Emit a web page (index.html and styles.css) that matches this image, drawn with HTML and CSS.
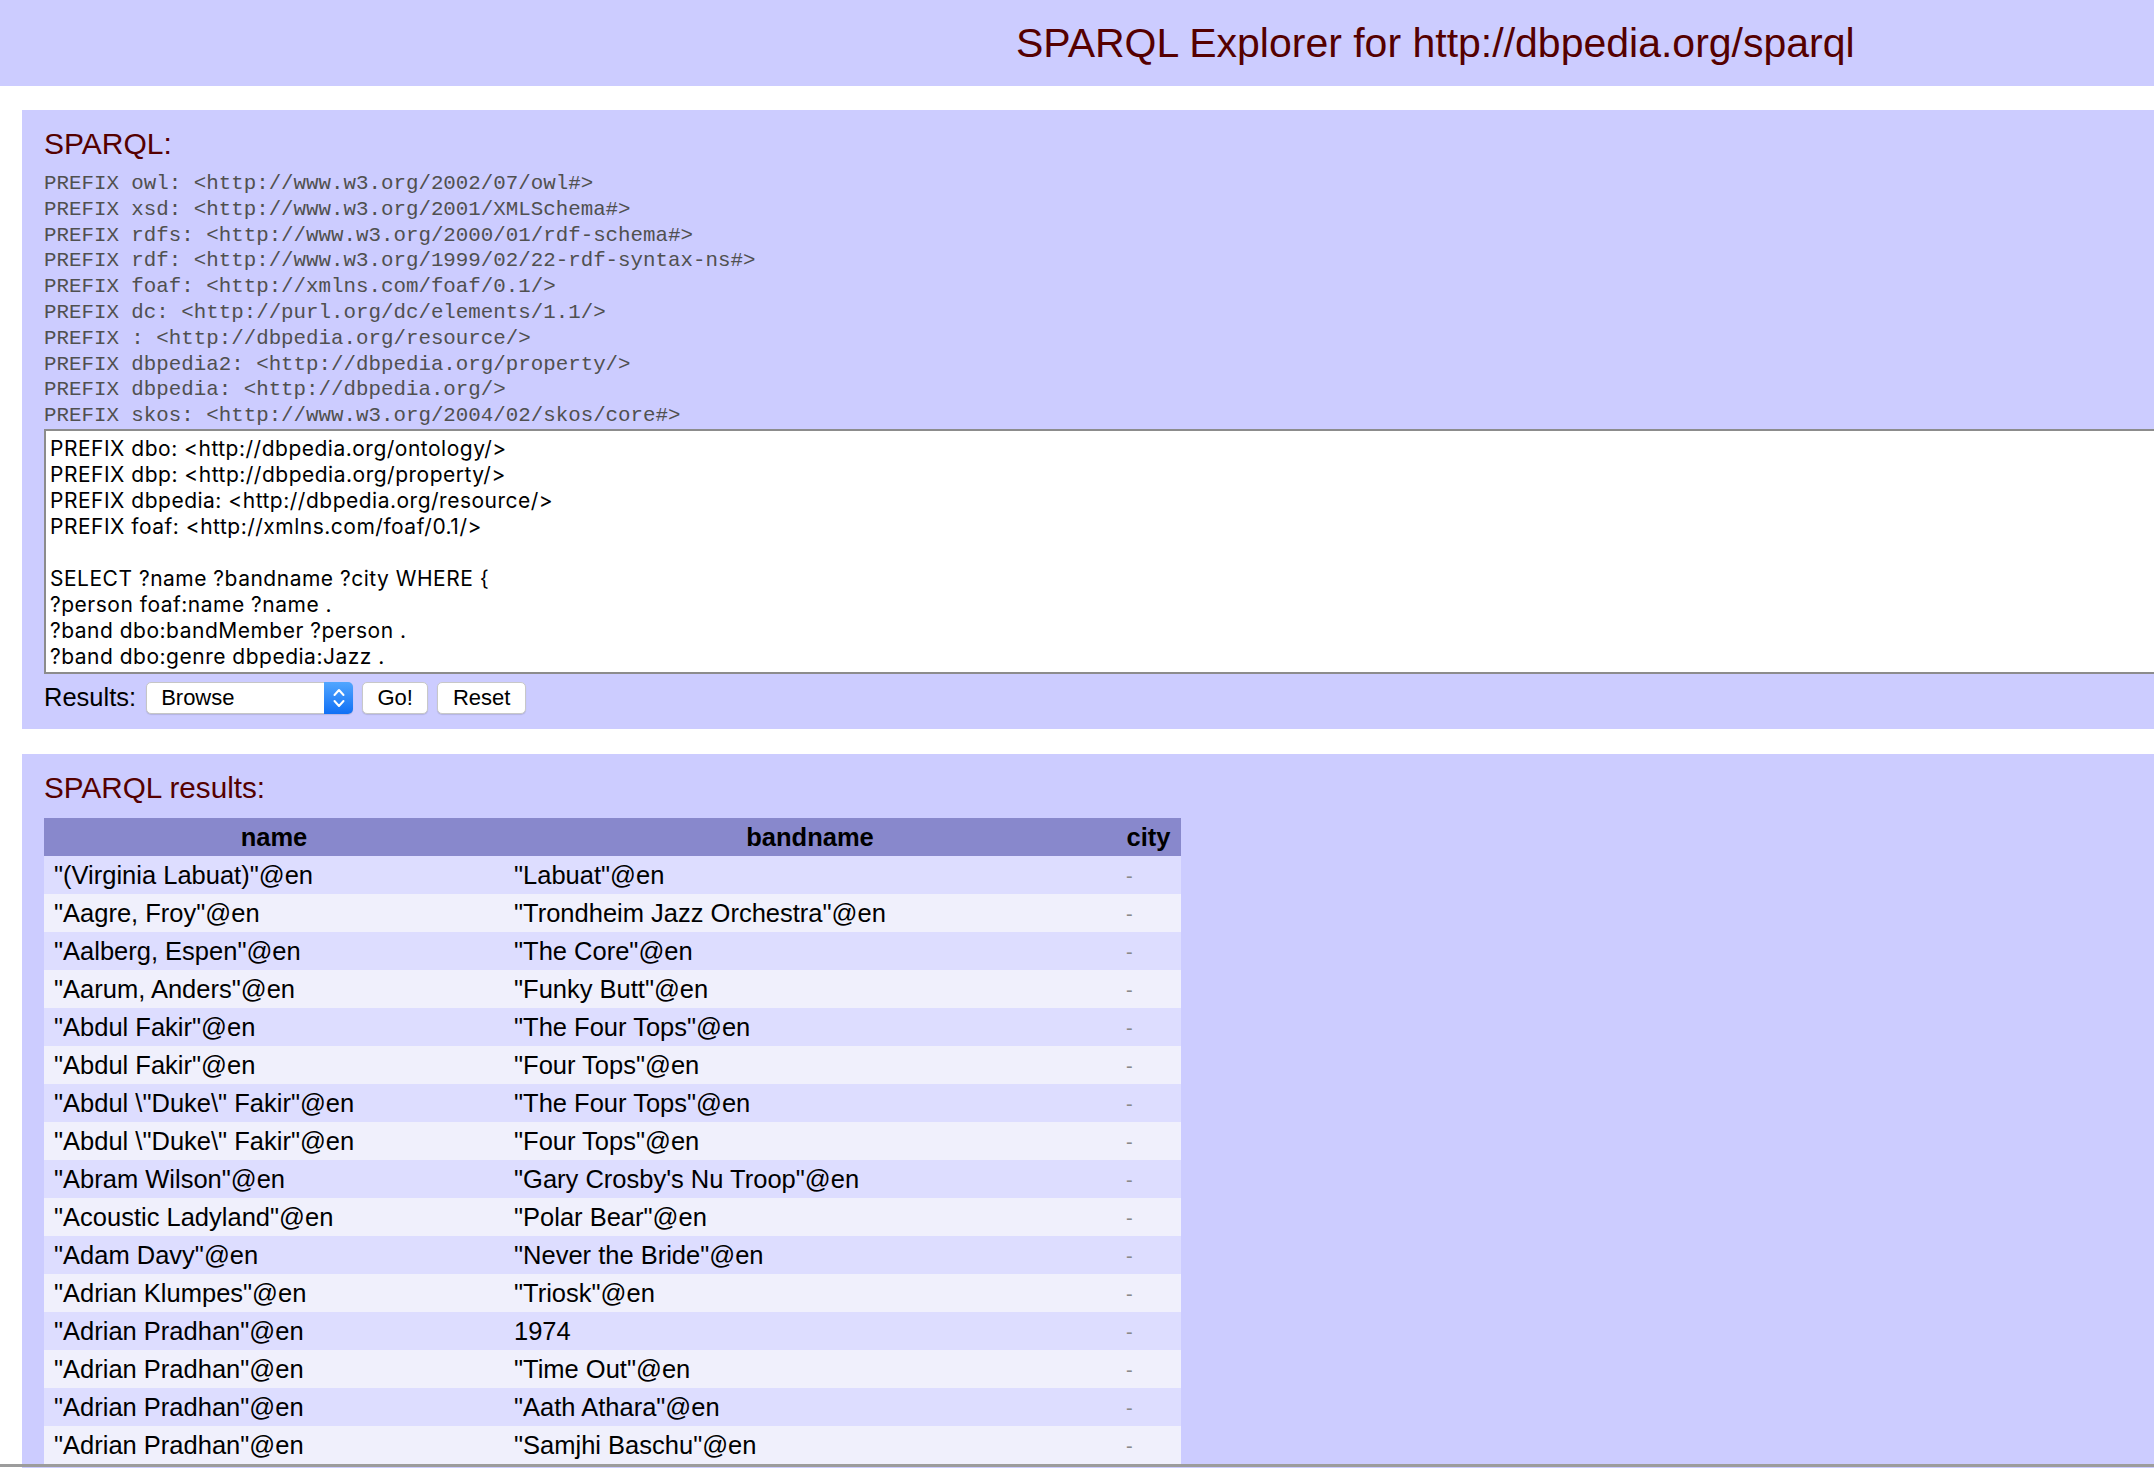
FILE: index.html
```html
<!DOCTYPE html>
<html lang="en">
<head>
<meta charset="utf-8">
<title>SPARQL Explorer for http://dbpedia.org/sparql</title>
<link rel="stylesheet" href="styles.css">
</head>
<body>
<div class="banner">
  <h1>SPARQL Explorer for http://dbpedia.org/sparql</h1>
</div>

<div class="panel">
  <h2>SPARQL:</h2>
  <pre class="prefixes">PREFIX owl: &lt;http://www.w3.org/2002/07/owl#&gt;
PREFIX xsd: &lt;http://www.w3.org/2001/XMLSchema#&gt;
PREFIX rdfs: &lt;http://www.w3.org/2000/01/rdf-schema#&gt;
PREFIX rdf: &lt;http://www.w3.org/1999/02/22-rdf-syntax-ns#&gt;
PREFIX foaf: &lt;http://xmlns.com/foaf/0.1/&gt;
PREFIX dc: &lt;http://purl.org/dc/elements/1.1/&gt;
PREFIX : &lt;http://dbpedia.org/resource/&gt;
PREFIX dbpedia2: &lt;http://dbpedia.org/property/&gt;
PREFIX dbpedia: &lt;http://dbpedia.org/&gt;
PREFIX skos: &lt;http://www.w3.org/2004/02/skos/core#&gt;</pre>
  <textarea class="query" spellcheck="false">PREFIX dbo: &lt;http://dbpedia.org/ontology/&gt;
PREFIX dbp: &lt;http://dbpedia.org/property/&gt;
PREFIX dbpedia: &lt;http://dbpedia.org/resource/&gt;
PREFIX foaf: &lt;http://xmlns.com/foaf/0.1/&gt;

SELECT ?name ?bandname ?city WHERE {
?person foaf:name ?name .
?band dbo:bandMember ?person .
?band dbo:genre dbpedia:Jazz .</textarea>
  <div class="controls">
    <span class="label">Results:</span>
    <div class="picker">
      <select class="picker-select">
        <option>Browse</option>
        <option>as JSON</option>
        <option>as XML</option>
      </select>
      <span class="picker-arrow">
        <svg width="12" height="24" viewBox="0 0 12 24" aria-hidden="true">
          <polyline points="1.5,9 6,4 10.5,9" fill="none" stroke="#fff" stroke-width="2" stroke-linecap="round" stroke-linejoin="round"/>
          <polyline points="1.5,15 6,20 10.5,15" fill="none" stroke="#fff" stroke-width="2" stroke-linecap="round" stroke-linejoin="round"/>
        </svg>
      </span>
    </div>
    <button class="btn btn-go">Go!</button>
    <button class="btn btn-reset">Reset</button>
  </div>
</div>

<div class="panel panel-results">
  <h2>SPARQL results:</h2>
  <table class="results">
    <thead>
      <tr><th class="col-name">name</th><th class="col-band">bandname</th><th class="col-city">city</th></tr>
    </thead>
    <tbody>
      <tr><td>"(Virginia Labuat)"@en</td><td>"Labuat"@en</td><td><span class="unbound">-</span></td></tr>
      <tr><td>"Aagre, Froy"@en</td><td>"Trondheim Jazz Orchestra"@en</td><td><span class="unbound">-</span></td></tr>
      <tr><td>"Aalberg, Espen"@en</td><td>"The Core"@en</td><td><span class="unbound">-</span></td></tr>
      <tr><td>"Aarum, Anders"@en</td><td>"Funky Butt"@en</td><td><span class="unbound">-</span></td></tr>
      <tr><td>"Abdul Fakir"@en</td><td>"The Four Tops"@en</td><td><span class="unbound">-</span></td></tr>
      <tr><td>"Abdul Fakir"@en</td><td>"Four Tops"@en</td><td><span class="unbound">-</span></td></tr>
      <tr><td>"Abdul \"Duke\" Fakir"@en</td><td>"The Four Tops"@en</td><td><span class="unbound">-</span></td></tr>
      <tr><td>"Abdul \"Duke\" Fakir"@en</td><td>"Four Tops"@en</td><td><span class="unbound">-</span></td></tr>
      <tr><td>"Abram Wilson"@en</td><td>"Gary Crosby's Nu Troop"@en</td><td><span class="unbound">-</span></td></tr>
      <tr><td>"Acoustic Ladyland"@en</td><td>"Polar Bear"@en</td><td><span class="unbound">-</span></td></tr>
      <tr><td>"Adam Davy"@en</td><td>"Never the Bride"@en</td><td><span class="unbound">-</span></td></tr>
      <tr><td>"Adrian Klumpes"@en</td><td>"Triosk"@en</td><td><span class="unbound">-</span></td></tr>
      <tr><td>"Adrian Pradhan"@en</td><td>1974</td><td><span class="unbound">-</span></td></tr>
      <tr><td>"Adrian Pradhan"@en</td><td>"Time Out"@en</td><td><span class="unbound">-</span></td></tr>
      <tr><td>"Adrian Pradhan"@en</td><td>"Aath Athara"@en</td><td><span class="unbound">-</span></td></tr>
      <tr><td>"Adrian Pradhan"@en</td><td>"Samjhi Baschu"@en</td><td><span class="unbound">-</span></td></tr>
    </tbody>
  </table>
</div>

<div class="window-edge"></div>
</body>
</html>
```

FILE: styles.css
```css
* {
  box-sizing: border-box;
}

html,
body {
  margin: 0;
  padding: 0;
}

body {
  background: #ffffff;
  color: #000000;
  font-family: "Liberation Sans", Arial, sans-serif;
  overflow: hidden;
}

/* Banner */
.banner {
  height: 86px;
  background: #ccccff;
  padding: 20px 0 0 1016px;
}

.banner h1 {
  margin: 0;
  font-size: 41px;
  line-height: 47px;
  font-weight: normal;
  color: #550000;
  white-space: nowrap;
}

/* Panels */
.panel {
  background: #ccccff;
  margin: 24px 0 0 22px;
  padding: 17px 0 15px 22px;
  overflow: hidden;
}

.panel-results {
  margin-top: 25px;
  padding-bottom: 20px;
}

.panel h2 {
  margin: 0;
  font-size: 30px;
  line-height: 34px;
  font-weight: normal;
  color: #550000;
}

.panel-results h2 {
  font-size: 29.7px;
}

.prefixes {
  margin: 10px 0 0;
  font-family: "Liberation Mono", "Courier New", monospace;
  font-size: 20.8px;
  line-height: 25.8px;
  color: #505050;
  white-space: pre;
}

.query {
  display: block;
  width: 2200px;
  height: 245px;
  margin: 0;
  padding: 5px 4px;
  border: 2px solid #8c8c8c;
  background: #ffffff;
  color: #000000;
  font-family: Inter, "Liberation Sans", Arial, sans-serif;
  font-size: 21px;
  letter-spacing: 0.5px;
  line-height: 26px;
  resize: none;
  overflow: hidden;
}

/* Controls */
.controls {
  display: flex;
  align-items: center;
  height: 32px;
  margin-top: 8px;
}

.label {
  font-size: 25.5px;
  margin-right: 10px;
}

.picker {
  position: relative;
  width: 207px;
  height: 32px;
  margin-right: 9px;
}

.picker-select {
  -webkit-appearance: none;
  appearance: none;
  width: 100%;
  height: 100%;
  margin: 0;
  padding: 0 0 0 14px;
  border: 1px solid #c6c6c6;
  border-radius: 5px;
  background: #ffffff;
  color: #000000;
  font-family: "Liberation Sans", Arial, sans-serif;
  font-size: 22px;
  box-shadow: 0 1px 1px rgba(0, 0, 0, 0.12);
  outline: none;
}

.picker-arrow {
  position: absolute;
  top: 0;
  right: 0;
  width: 29px;
  height: 32px;
  border-radius: 0 5px 5px 0;
  background: linear-gradient(#52a6ff, #1070f5);
  display: flex;
  align-items: center;
  justify-content: center;
}

.btn {
  height: 32px;
  margin: 0;
  padding: 0;
  border: 1px solid #c8c8c8;
  border-radius: 5px;
  background: #ffffff;
  color: #000000;
  font-family: "Liberation Sans", Arial, sans-serif;
  font-size: 22px;
  box-shadow: 0 1px 1px rgba(0, 0, 0, 0.12);
}

.btn-go {
  width: 66px;
  margin-right: 9px;
}

.btn-reset {
  width: 89px;
}

/* Results table */
.results {
  border-collapse: collapse;
  table-layout: fixed;
  width: 1137px;
  margin-top: 13px;
  font-size: 25.5px;
}

.results th {
  height: 38px;
  padding: 0 10px;
  line-height: 30px;
  background: #8888cc;
  font-weight: bold;
  text-align: center;
}

.results td {
  height: 38px;
  padding: 0 10px;
  line-height: 30px;
  white-space: nowrap;
  text-align: left;
}

.results tbody tr:nth-child(odd) td {
  background: #ddddff;
}

.results tbody tr:nth-child(even) td {
  background: #f0f0fc;
}

.col-name {
  width: 460px;
}

.col-band {
  width: 612px;
}

.col-city {
  width: 65px;
}

.unbound {
  color: #8a8a8a;
  font-size: 20px;
}

.window-edge {
  position: fixed;
  left: 0;
  right: 0;
  bottom: 1px;
  height: 3px;
  background: #9c9c9c;
}
```
